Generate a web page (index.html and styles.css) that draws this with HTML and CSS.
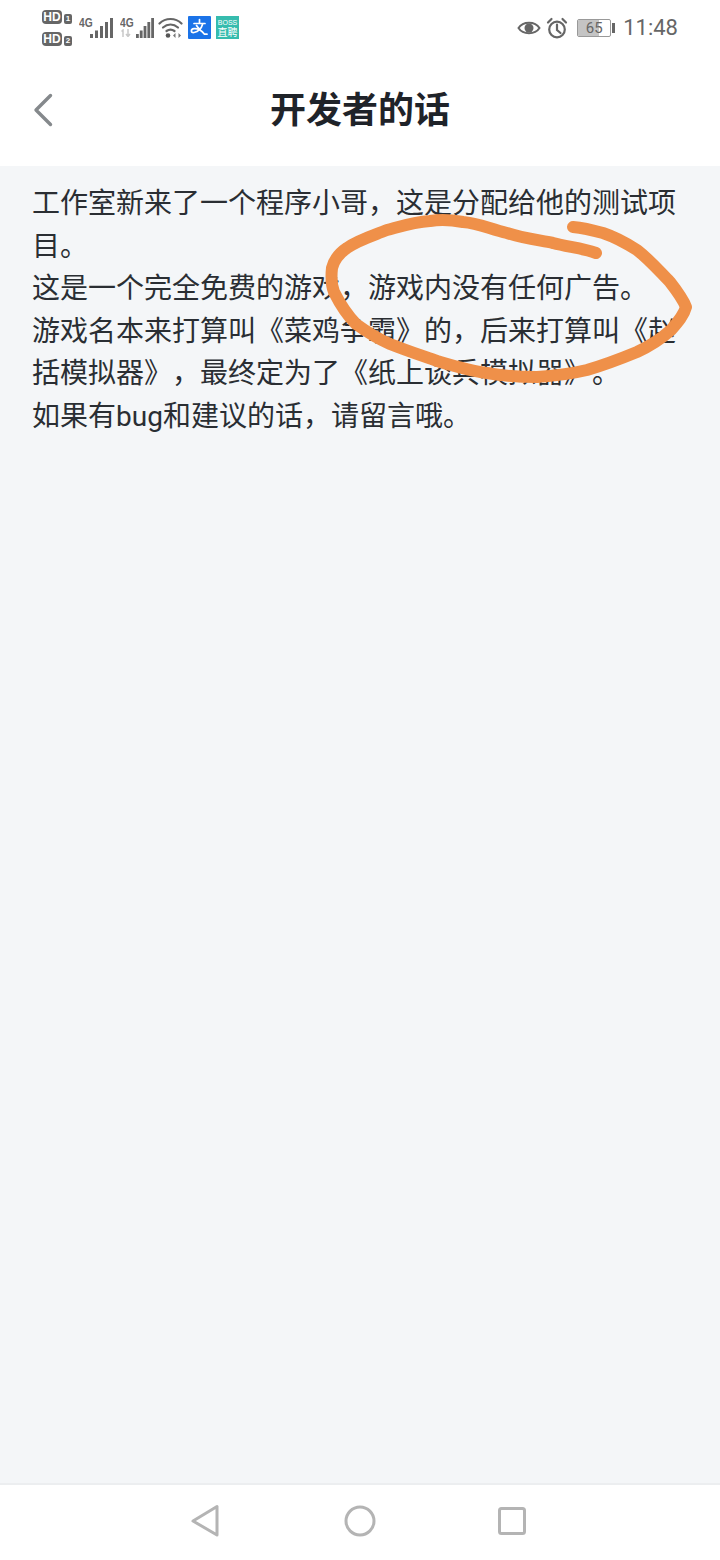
FILE: index.html
```html
<!DOCTYPE html>
<html lang="zh">
<head>
<meta charset="utf-8">
<title>开发者的话</title>
<link rel="stylesheet" href="styles.css">
</head>
<body>
<div class="screen">
  <div class="status">
    <div class="status-left">
      <div class="sims">
        <div class="sim"><span class="hd">HD</span><span class="simno">1</span></div>
        <div class="sim"><span class="hd">HD</span><span class="simno">2</span></div>
      </div>
      <div class="signal">
        <span class="net">4G</span>
        <svg class="bars" width="23" height="20" viewBox="0 0 23 20"><g fill="#666"><rect x="0" y="16" width="3" height="4"/><rect x="5" y="12.500" width="3" height="7.500"/><rect x="10" y="8" width="3" height="12"/><rect x="15" y="4" width="3" height="16"/><rect x="20" y="0" width="3" height="20"/></g></svg>
      </div>
      <div class="signal">
        <span class="net">4G</span>
        <svg class="data" width="11" height="8" viewBox="0 0 11 8"><g fill="none" stroke="#c9c9c9" stroke-width="1.500"><path d="M2 8V1L.5 2.500"/><path d="M7 0v7M5 5l2 2.500L9 5"/></g></svg>
        <svg class="bars bars-short" width="18" height="20" viewBox="0 0 18 20"><g fill="#666"><rect x="0" y="16" width="2.800" height="4"/><rect x="3.800" y="12.500" width="2.800" height="7.500"/><rect x="7.600" y="8" width="2.800" height="12"/><rect x="11.400" y="4" width="2.800" height="16"/><rect x="15.200" y="0" width="2.800" height="20"/></g></svg>
      </div>
      <svg class="wifi" width="26" height="22" viewBox="0 0 26 22"><g fill="none" stroke="#666" stroke-width="2.200" stroke-linecap="round"><path d="M1.500 6.500C7.500 .5 17.500 .5 23.500 6.500"/><path d="M5 10.500C9.500 6.500 15.500 6.500 20 10.500"/><path d="M8.500 14C11 12.200 14 12.200 16.500 14"/></g><circle cx="10" cy="18.500" r="2.300" fill="#555"/><path d="M15 18.500l2.500-2.500v5zM23 18.500l-2.500-2.500v5z" fill="#777"/></svg>
      <svg class="app" width="23" height="23" viewBox="0 0 23 23"><rect width="23" height="23" rx="1" fill="#1b73e8"/><g fill="none" stroke="#fff" stroke-width="1.700" stroke-linecap="round" stroke-linejoin="round"><path d="M11.500 3.500v4M6 7.500h11M14.500 8.500c-1 3.500-4 7-8.500 8-3.500.7-3.500-3.500 0-3.800 4-.3 8 2.300 10.500 5.500h2.500"/><path d="M8.500 9.500c1 1.500 2 2.800 3.500 4"/></g></svg>
      <div class="boss"><span class="boss-en">BOSS</span><span class="boss-cn">直聘</span></div>
    </div>
    <div class="status-right">
      <svg width="24" height="18" viewBox="0 0 24 18"><path d="M1.500 9C6 2 18 2 22.500 9 18 16 6 16 1.500 9Z" fill="none" stroke="#666" stroke-width="2"/><circle cx="12" cy="9" r="4.500" fill="#666"/></svg>
      <svg class="alarm" width="22" height="22" viewBox="0 0 22 22"><g fill="none" stroke="#666" stroke-width="2.200"><circle cx="11" cy="12.500" r="7.800"/><path d="M11 7.500v5.500l3.500 3" stroke-linecap="round"/><path d="M2 5.500L5.500 2M20 5.500L16.500 2" stroke-linecap="round"/></g></svg>
      <div class="battery"><div class="cell"><span class="fill"></span><span class="level">65</span></div><span class="nub"></span></div>
      <span class="time">11:48</span>
    </div>
  </div>

  <header class="titlebar">
    <svg class="back" width="22" height="34" viewBox="0 0 22 34"><path d="M18.500 2.500L4 17 18.500 31.500" fill="none" stroke="#85898c" stroke-width="3.400" stroke-linecap="round" stroke-linejoin="round"/></svg>
    <h1 class="title">开发者的话</h1>
  </header>

  <main class="content">
    <p class="line">工作室新来了一个程序小哥，这是分配给他的测试项目。</p>
    <p class="line">这是一个完全免费的游戏，游戏内没有任何广告。</p>
    <p class="line">游戏名本来打算叫《菜鸡争霸》的，后来打算叫《赵括模拟器》，最终定为了《纸上谈兵模拟器》。</p>
    <p class="line">如果有bug和建议的话，请留言哦。</p>
  </main>

  <nav class="navbar">
    <svg width="30" height="34" viewBox="0 0 30 34"><path d="M27 2.500V31L3 17Z" fill="none" stroke="#b4b4b4" stroke-width="3" stroke-linejoin="round"/></svg>
    <svg width="32" height="32" viewBox="0 0 32 32"><circle cx="16" cy="16" r="14" fill="none" stroke="#b4b4b4" stroke-width="3"/></svg>
    <svg class="nav-square" width="30" height="30" viewBox="0 0 30 30"><rect x="2.500" y="2.500" width="25" height="25" rx="2" fill="none" stroke="#b4b4b4" stroke-width="3"/></svg>
  </nav>

  <svg class="scribble" width="720" height="1560" viewBox="0 0 720 1560"><path d="M596 253C582 248 568 247 553 243C538 240 522 238 507 233C490 229 478 223 463 222C452 220 442 219 430 221C414 222 402 226 387 230C372 236 358 240 347 248C338 254 334 260 332 268C331 277 331 284 334 292C340 304 346 314 356 324C367 332 376 338 390 344C405 350 420 355 437 361C454 366 470 371 487 373C504 376 520 377 537 377C554 376 570 374 587 370C604 365 620 359 637 352C650 346 662 338 671 330C678 322 684 315 686 307C683 299 677 291 670 282C660 272 650 260 637 250C626 243 615 237 603 233C592 230 584 228 573 227" fill="none" stroke="#ef9049" stroke-width="12" stroke-linecap="round" stroke-linejoin="round"/></svg>
</div>
</body>
</html>
```

FILE: styles.css
```css
* { box-sizing: border-box; margin: 0; padding: 0; }
html, body { width: 720px; height: 1560px; overflow: hidden; }
body { font-family: "Roboto", "Noto Sans CJK SC", "Liberation Sans", sans-serif; background: #f4f6f8; text-spacing-trim: space-all; }
.screen { position: relative; display: flex; flex-direction: column; width: 720px; height: 1560px; }

.status { display: flex; justify-content: space-between; align-items: center; height: 56px; padding: 0 42px 1px; background: #fff; color: #666; }
.status-left { display: flex; align-items: center; gap: 5px; }
.status-right { display: flex; align-items: center; gap: 8px; }
.sims { display: flex; flex-direction: column; gap: 8px; }
.sim { display: flex; align-items: center; gap: 2px; }
.hd { display: block; width: 20px; height: 14px; border-radius: 4px; background: #666; color: #fff; font: bold 12px/14px "Liberation Sans", sans-serif; text-align: center; }
.simno { display: block; width: 8px; height: 10px; margin-top: 4px; border-radius: 2px; background: #666; color: #fff; font: bold 8px/10px "Liberation Sans", sans-serif; text-align: center; }
.signal { position: relative; width: 34px; height: 22px; margin-left: 2px; }
.net { position: absolute; left: 0; top: 0; font: bold 12px/13px "Liberation Sans Narrow", "Liberation Sans", sans-serif; color: #666; transform: scaleX(.85); transform-origin: left; }
.bars { position: absolute; right: 0; bottom: 1px; }
.data { position: absolute; left: 1px; bottom: 2px; }
.wifi { margin-left: -1px; }
.app { display: block; margin-left: -1px; }
.boss { display: flex; flex-direction: column; align-items: center; width: 23px; height: 23px; background: #36bcae; color: #fff; }
.boss-en { font: 7px/9px "Liberation Sans", sans-serif; margin-top: 2px; }
.boss-cn { font: 10px/10px "Noto Sans CJK SC", sans-serif; }
.alarm { margin: 0 1px 0 -3px; }
.battery { display: flex; align-items: center; gap: 1px; }
.cell { position: relative; width: 34px; height: 18px; border: 1px solid #999; border-radius: 2px; overflow: hidden; }
.fill { position: absolute; left: 0; top: 0; bottom: 0; width: 65%; background: #c4c4c4; }
.level { position: relative; display: block; text-align: center; font: 15px/16px "Roboto", sans-serif; color: #666; }
.nub { display: block; width: 3px; height: 10px; background: #666; }
.time { font: 22px/26px "Roboto", sans-serif; color: #666; }

.titlebar { position: relative; display: flex; align-items: center; justify-content: center; height: 110px; background: #fff; }
.back { position: absolute; left: 32px; top: 37px; }
.title { font-size: 36px; line-height: 50px; font-weight: 700; color: #1f2329; }

.content { flex: 1; padding: 17px 32px 0; background: #f4f6f8; }
.line { font-size: 28px; line-height: 42.600px; color: #2a2e33; }

.navbar { display: flex; align-items: center; justify-content: center; gap: 124px; height: 77px; padding: 0 4px 4px 0; background: #fff; border-top: 2px solid #eceef0; }
.nav-square { margin-left: -3px; }

.scribble { position: absolute; left: 0; top: 0; pointer-events: none; }
```
